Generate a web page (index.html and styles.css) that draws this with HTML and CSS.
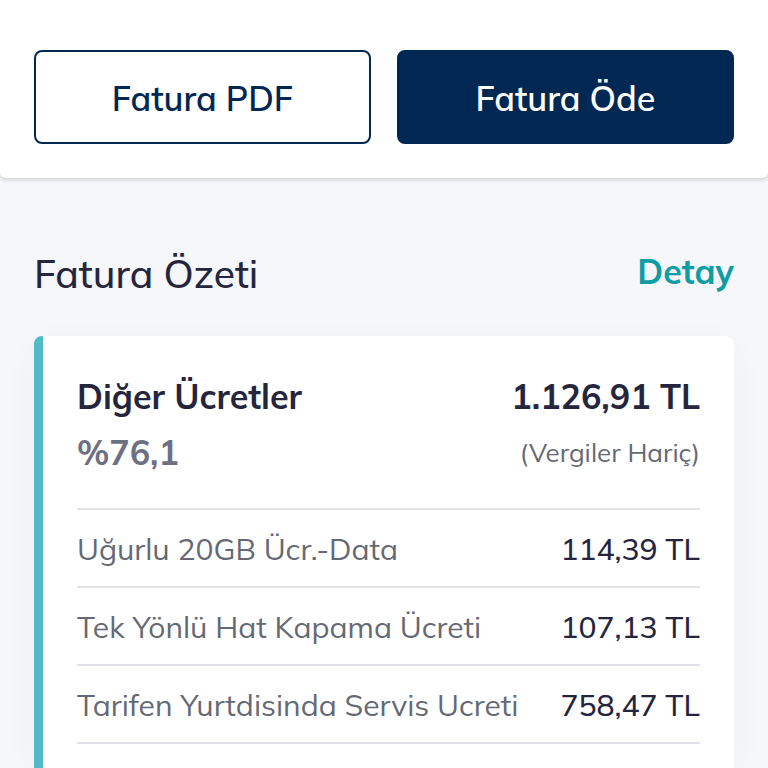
FILE: index.html
```html
<!DOCTYPE html>
<html lang="tr">

<head>
    <meta charset="UTF-8">
    <meta name="viewport" content="width=device-width, initial-scale=1.0">
    <title>Fatura Özeti</title>
    <link rel="stylesheet" href="styles.css">
</head>

<body>
    <header class="actions">
        <button type="button" class="btn btn-outline">Fatura PDF</button>
        <button type="button" class="btn btn-primary">Fatura Öde</button>
    </header>

    <main class="summary">
        <div class="summary-header">
            <h1>Fatura Özeti</h1>
            <a href="#detay" class="detail-link">Detay</a>
        </div>

        <section class="card" id="detay">
            <div class="card-row card-title">
                <h2>Diğer Ücretler</h2>
                <strong>1.126,91 TL</strong>
            </div>
            <div class="card-row card-info">
                <span class="percent">%76,1</span>
                <span class="tax-note">(Vergiler Hariç)</span>
            </div>

            <ul class="fees">
                <li><span>Uğurlu 20GB Ücr.-Data</span><span class="amount">114,39 TL</span></li>
                <li><span>Tek Yönlü Hat Kapama Ücreti</span><span class="amount">107,13 TL</span></li>
                <li><span>Tarifen Yurtdisinda Servis Ucreti</span><span class="amount">758,47 TL</span></li>
            </ul>
        </section>
    </main>
</body>

</html>
```

FILE: styles.css
```css
* {
    margin: 0;
    padding: 0;
    box-sizing: border-box;
}

:root {
    --navy: #002852;
    --teal: #0f9da4;
    --teal-light: #50bac6;
    --text-primary: #25263d;
    --text-secondary: #646973;
    --page-bg: #f5f7fa;
    --line: #e1e2e9;
}

body {
    display: flex;
    flex-direction: column;
    min-height: 100vh;
    background-color: var(--page-bg);
    color: var(--text-primary);
    font-family: Mulish, Muli, Lato, sans-serif;
}

.actions {
    display: flex;
    gap: 26px;
    padding: 50px 34px 34px;
    background-color: white;
    border-radius: 0 0 6px 6px;
    box-shadow: 0 2px 4px rgba(0, 0, 0, 0.16);
}

.btn {
    flex: 1;
    height: 94px;
    padding-top: 2px;
    border: 2px solid var(--navy);
    border-radius: 8px;
    font-family: inherit;
    font-size: 34px;
    font-weight: 600;
    cursor: pointer;
}

.btn-outline {
    background-color: white;
    color: var(--navy);
}

.btn-primary {
    background-color: var(--navy);
    color: white;
}

.summary {
    display: flex;
    flex: 1;
    flex-direction: column;
    padding: 70px 34px 0;
}

.summary-header {
    display: flex;
    justify-content: space-between;
    align-items: flex-start;
    margin-bottom: 36px;
}

h1 {
    font-size: 39px;
    font-weight: 500;
    line-height: 52px;
}

.detail-link {
    color: var(--teal);
    font-size: 34px;
    font-weight: 700;
    line-height: 48px;
    text-decoration: none;
}

.card {
    flex: 1;
    padding: 32px 34px 0;
    background-color: white;
    border-left: 9px solid var(--teal-light);
    border-radius: 8px 8px 0 0;
    box-shadow: 0 8px 32px rgba(0, 0, 0, 0.04);
}

.card-row {
    display: flex;
    justify-content: space-between;
    align-items: center;
    height: 56px;
}

.card-title {
    font-size: 34px;
}

.card-title h2 {
    font-size: inherit;
}

.percent {
    color: #6d7083;
    font-size: 34px;
    font-weight: 700;
}

.tax-note {
    color: var(--text-secondary);
    font-size: 26px;
}

.fees {
    margin-top: 28px;
    border-top: 2px solid var(--line);
    list-style: none;
}

.fees li {
    display: flex;
    justify-content: space-between;
    align-items: center;
    height: 78px;
    padding-top: 2px;
    border-bottom: 2px solid var(--line);
    color: var(--text-secondary);
    font-size: 30px;
}

.fees .amount {
    color: var(--text-primary);
    font-weight: 500;
}
```
